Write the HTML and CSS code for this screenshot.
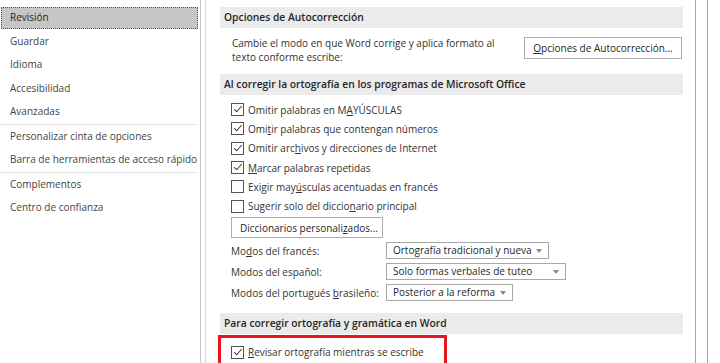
FILE: index.html
```html
<!DOCTYPE html>
<html lang="es">
<head>
<meta charset="utf-8">
<title>Opciones de Word - Revisión</title>
<link rel="stylesheet" href="styles.css">
</head>
<body>
<nav class="sidebar">
  <div class="nav-item active"><span class="nav-focus">Revisión</span></div>
  <div class="nav-item">Guardar</div>
  <div class="nav-item">Idioma</div>
  <div class="nav-item">Accesibilidad</div>
  <div class="nav-item">Avanzadas</div>
  <div class="nav-sep"></div>
  <div class="nav-item">Personalizar cinta de opciones</div>
  <div class="nav-item">Barra de herramientas de acceso rápido</div>
  <div class="nav-sep"></div>
  <div class="nav-item">Complementos</div>
  <div class="nav-item">Centro de confianza</div>
</nav>
<main class="panel">
  <section class="section">
    <h2 class="section-head">Opciones de Autocorrección</h2>
    <div class="auto-row">
      <p class="auto-text">Cambie el modo en que Word corrige y aplica formato al texto conforme escribe:</p>
      <button class="btn btn-auto"><u>O</u>pciones de Autocorrección...</button>
    </div>
  </section>
  <section class="section">
    <h2 class="section-head">Al corregir la ortografía en los programas de Microsoft Office</h2>
    <div class="checks">
      <label class="check"><span class="box on"></span><span>Omitir palabras en M<u>A</u>YÚSCULAS</span></label>
      <label class="check"><span class="box on"></span><span>Omi<u>t</u>ir palabras que contengan números</span></label>
      <label class="check"><span class="box on"></span><span>Omitir arc<u>h</u>ivos y direcciones de Internet</span></label>
      <label class="check"><span class="box on"></span><span><u>M</u>arcar palabras repetidas</span></label>
      <label class="check"><span class="box"></span><span>Exigir may<u>ú</u>sculas acentuadas en francés</span></label>
      <label class="check"><span class="box"></span><span>Sugerir solo del diccio<u>n</u>ario principal</span></label>
    </div>
    <button class="btn btn-dict">Diccionarios personali<u>z</u>ados...</button>
    <div class="modes">
      <span class="mode-label">Mo<u>d</u>os del francés:</span>
      <span class="select sel-fr">Ortografía tradicional y nueva<i class="arrow"></i></span>
      <span class="mode-label">Modos del español:</span>
      <span class="select sel-es">Solo formas verbales de tuteo<i class="arrow"></i></span>
      <span class="mode-label">Modos del portugués <u>b</u>rasileño:</span>
      <span class="select sel-pt">Posterior a la reforma<i class="arrow"></i></span>
    </div>
  </section>
  <section class="section">
    <h2 class="section-head">Para corregir ortografía y gramática en Word</h2>
    <div class="highlight">
      <label class="check"><span class="box on"></span><span><u>R</u>evisar ortografía mientras se escribe</span></label>
    </div>
  </section>
</main>
<div class="scroll-gap"></div>
</body>
</html>
```
FILE: styles.css
```css
html, body {
  margin: 0;
  padding: 0;
  background: #ffffff;
}
body {
  display: flex;
  width: 720px;
  height: 363px;
  overflow: hidden;
  font-family: "Open Sans", "Noto Sans", "Liberation Sans", sans-serif;
  font-size: 10px;
  color: #333333;
}
u { text-decoration: underline; text-underline-offset: 1px; }

.sidebar {
  width: 201px;
  flex: none;
  box-sizing: border-box;
  border-right: 1px solid #c9c9c9;
  padding-top: 6px;
  color: #444444;
  font-size: 10px;
}
.nav-item {
  height: 23.5px;
  line-height: 23.5px;
  padding-left: 10px;
  white-space: nowrap;
}
.nav-item.active {
  padding: 1px 2px 1px 1px;
  height: 21.5px;
  line-height: 21.5px;
}
.nav-focus {
  display: block;
  height: 100%;
  box-sizing: border-box;
  padding-left: 8px;
  background: #c6c6c6;
  border: 1px dotted #555555;
  color: #262626;
  line-height: 19.5px;
}
.nav-sep {
  height: 1px;
  background: #e1e1e1;
  margin-right: 3px;
}

.panel {
  width: 491px;
  flex: none;
  box-sizing: border-box;
  margin-left: 4px;
  border-left: 1px solid #dcdcdc;
  border-right: 1px solid #a9a9a9;
  padding: 7px 12px 0 14px;
}
.section-head {
  margin: 0;
  height: 21px;
  line-height: 21px;
  background: #ebebeb;
  padding-left: 4px;
  font-size: 10.3px;
  font-weight: 600;
  color: #262626;
  white-space: nowrap;
}
.auto-row {
  display: flex;
  align-items: flex-start;
  justify-content: space-between;
  padding: 8px 1px 10px 12px;
}
.auto-text {
  margin: 0;
  width: 270px;
  line-height: 14px;
}
.btn {
  font: inherit;
  color: #262626;
  background: #ffffff;
  border: 1px solid #adadad;
  padding: 0 8px;
  margin: 0;
  white-space: nowrap;
}
.btn-auto {
  width: 158px;
  height: 22px;
  margin-top: 1px;
}

.checks {
  padding: 5px 0 0 11px;
}
.check {
  display: flex;
  align-items: center;
  gap: 4px;
  height: 19.33px;
  white-space: nowrap;
}
.box {
  width: 11px;
  height: 11px;
  flex: none;
  border: 1px solid #555555;
  background: #ffffff;
  position: relative;
}
.box.on::after {
  content: "";
  position: absolute;
  left: 3.5px;
  top: 0px;
  width: 3px;
  height: 7px;
  border-right: 1px solid #333333;
  border-bottom: 1px solid #333333;
  transform: rotate(42deg);
}
.btn-dict {
  display: block;
  margin: 1.5px 0 0 11px;
  width: 152px;
  height: 21px;
}
.modes {
  display: grid;
  grid-template-columns: 155px auto;
  row-gap: 4px;
  justify-items: start;
  align-items: center;
  padding: 4px 0 0 11px;
  margin-bottom: 12px;
}
.mode-label { white-space: nowrap; }
.select {
  position: relative;
  height: 17px;
  line-height: 15px;
  box-sizing: border-box;
  border: 1px solid #a8a8a8;
  padding-left: 6px;
  white-space: nowrap;
  color: #262626;
}
.sel-fr { width: 163px; }
.sel-es { width: 180px; }
.sel-pt { width: 127px; }
.arrow {
  position: absolute;
  right: 6px;
  top: 6px;
  width: 0;
  height: 0;
  border-left: 3.5px solid transparent;
  border-right: 3.5px solid transparent;
  border-top: 4px solid #8a8a8a;
}
.highlight {
  margin: 1px 0 0 -2px;
  width: 213px;
  height: 30px;
  border: 3px solid #e8141e;
  padding: 4px 0 0 10px;
}
.scroll-gap {
  width: 12px;
  flex: none;
  box-sizing: border-box;
  border-right: 1px solid #a9a9a9;
}
```
